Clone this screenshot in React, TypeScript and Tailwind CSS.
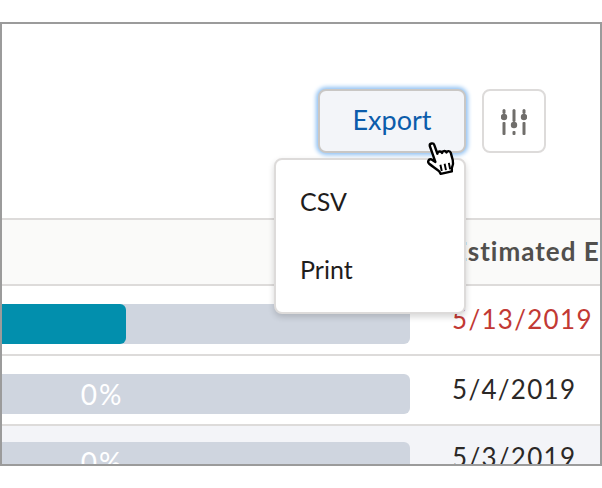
import React from 'react';

const HandCursor: React.FC = () => (
  <svg className="absolute left-[423px] top-[139px]" width="37" height="41" viewBox="0 0 34 38">
    <g transform="rotate(-12 17 19)">
      <path
        d="M9 4.500c0-2.600 4-2.600 4.300 0l1.100 8.500c.5-2.200 4-2.200 4.400.2.500-2 3.700-1.800 4.100.4.800-1.700 3.600-1 3.800 1.200l.4 7c.2 3-1 5-2.400 7l-.6 3H13.500l-.8-2.500C10 26 7 23 5 20.500 3.500 18.500 5.500 15.500 8 17l3 3L9 4.500z"
        fill="#fff"
        stroke="#000"
        strokeWidth="2.200"
        strokeLinejoin="round"
      />
      <path d="M15 23.500v6M19 23.500v6M23 23.500v6" stroke="#000" strokeWidth="1.800" />
    </g>
  </svg>
);

const SlidersIcon: React.FC = () => (
  <svg width="26" height="26" viewBox="0 0 26 26" fill="#706e6b">
    <rect x="1.500" y="0" width="3" height="5" rx="1.500" />
    <circle cx="3" cy="8" r="3.200" />
    <rect x="1.500" y="13" width="3" height="13" rx="1" />
    <rect x="11.500" y="0" width="3" height="13" rx="1.500" />
    <circle cx="13" cy="16" r="3.200" />
    <rect x="11.500" y="22" width="3" height="4" rx="1" />
    <rect x="21.500" y="0" width="3" height="5" rx="1.500" />
    <circle cx="23" cy="8" r="3.200" />
    <rect x="21.500" y="13" width="3" height="13" rx="1" />
  </svg>
);

const ProgressRow: React.FC<{ date: string; fill?: boolean; label?: string; dateClass: string; rowClass: string }> = ({
  date,
  fill,
  label,
  dateClass,
  rowClass,
}) => (
  <div className={`flex h-[70px] shrink-0 items-start border-b-2 border-[#dddbda] ${rowClass}`}>
    <div className="relative mt-[18px] flex h-10 w-[408px] shrink-0 justify-center rounded-r-md bg-[#cfd5df]">
      {fill && <div className="absolute left-0 top-0 h-10 w-[124px] rounded-r-md bg-[#028fad]" />}
      {label && <span className="ml-[-208px] text-[28px] leading-10 tracking-[2px] text-white">{label}</span>}
    </div>
    <span className={`ml-[42px] mt-[13px] whitespace-nowrap text-[26px] leading-10 tracking-[1.3px] ${dateClass}`}>{date}</span>
  </div>
);

const App: React.FC = () => (
  <div className="relative h-[488px] w-[602px] overflow-hidden bg-white pt-[22px] font-['Lato','Open_Sans',sans-serif]">
    <div className="flex h-[444px] flex-col overflow-hidden border-2 border-[#9b9b9b]">
      <div className="flex h-[194px] shrink-0 items-start justify-end gap-4 pr-[54px] pt-[65px]">
        <button className="flex h-[64px] w-[148px] items-center justify-center rounded-lg border-2 border-[#c9c7c5] bg-[#f3f5f9] pb-[2px] text-[27px] text-[#0b5cab] shadow-[0_0_4px_2px_#8fc1f3]">
          Export
        </button>
        <button className="flex h-[64px] w-[64px] items-center justify-center rounded-lg border-2 border-[#dddbda] bg-white pt-[2px]">
          <SlidersIcon />
        </button>
      </div>
      <div className="flex h-[68px] shrink-0 items-center justify-end overflow-hidden border-y-2 border-[#dddbda] bg-[#fafaf9] pb-[2px]">
        <span className="w-[148px] shrink-0 whitespace-nowrap text-[26px] font-bold tracking-[1px] text-[#514f4d]">Estimated End</span>
      </div>
      <ProgressRow date="5/13/2019" fill dateClass="text-[#c23934]" rowClass="bg-white" />
      <ProgressRow date="5/4/2019" label="0%" dateClass="text-[#2b2826]" rowClass="bg-white" />
      <div className="flex h-[70px] shrink-0 items-start bg-[#f3f4f8]">
        <div className="mt-[16px] flex h-10 w-[408px] shrink-0 justify-center rounded-r-md bg-[#cfd5df]">
          <span className="ml-[-208px] text-[28px] leading-10 tracking-[2px] text-white">0%</span>
        </div>
        <span className="ml-[42px] mt-[11px] whitespace-nowrap text-[26px] leading-10 tracking-[1.3px] text-[#2b2826]">5/3/2019</span>
      </div>
    </div>
    <div className="absolute left-[274px] top-[158px] flex h-[156px] w-[192px] flex-col justify-center gap-[28px] rounded-lg border-2 border-[#dddbda] bg-white pb-[2px] pl-[24px] text-[25px] leading-10 text-[#1f1d1c] shadow-[0_3px_6px_rgba(0,0,0,0.16)]">
      <span>CSV</span>
      <span>Print</span>
    </div>
    <HandCursor />
  </div>
);

export default App;
